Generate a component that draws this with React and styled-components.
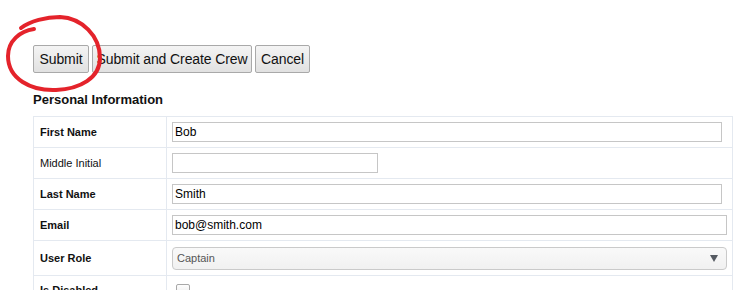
import styled, { createGlobalStyle } from "styled-components";

const GlobalStyle = createGlobalStyle`
  html, body {
    margin: 0;
    padding: 0;
    background: #ffffff;
  }
  body {
    font-family: "Liberation Sans", Arial, sans-serif;
    color: #000;
  }
`;

const Page = styled.div`
  position: relative;
  padding: 45px 0 0 33px;
  width: 754px;
  height: 290px;
  box-sizing: border-box;
  overflow: hidden;
`;

const Toolbar = styled.div`
  display: flex;
  gap: 3px;
  height: 28px;
`;

const Button = styled.button`
  width: ${(p) => p.$w}px;
  height: 28px;
  padding: 0;
  font-family: "Liberation Sans", Arial, sans-serif;
  font-size: 14px;
  letter-spacing: -0.1px;
  white-space: nowrap;
  color: #111;
  background: linear-gradient(#f4f4f4, #e1e1e1);
  border: 1px solid #a9a9a9;
  border-radius: 2px;
  cursor: pointer;
`;

const Heading = styled.h3`
  margin: 19px 0 8px;
  font-size: 13px;
  line-height: 16px;
  font-weight: bold;
  color: #111;
`;

const Table = styled.table`
  border-collapse: collapse;
  width: 700px;
  table-layout: fixed;
`;

const Row = styled.tr`
  height: ${(p) => p.$h || 31}px;
`;

const Label = styled.td`
  width: 120px;
  padding: ${(p) => (p.$top ? "8px 6px 0" : "0 6px")};
  border: 1px solid #e4e9f0;
  font-size: 11px;
  font-weight: ${(p) => (p.$bold ? "bold" : "normal")};
  color: #111;
  vertical-align: ${(p) => (p.$top ? "top" : "middle")};
`;

const Field = styled.td`
  padding: 0 5px;
  border: 1px solid #e4e9f0;
  vertical-align: ${(p) => (p.$top ? "top" : "middle")};
`;

const Input = styled.input`
  display: block;
  box-sizing: border-box;
  width: ${(p) => p.$w}px;
  height: 20px;
  padding: 0 2px;
  border: 1px solid #c6c6c6;
  font-family: "Liberation Sans", Arial, sans-serif;
  font-size: 12px;
  color: #000;
  outline: none;
`;

const Select = styled.div`
  box-sizing: border-box;
  width: 555px;
  height: 23px;
  padding: 0 4px;
  display: flex;
  align-items: center;
  border: 1px solid #cacaca;
  border-radius: 4px;
  background: linear-gradient(#f9f9f9, #f1f1f1);
  font-size: 11px;
  color: #555;
`;

const Arrow = styled.span`
  margin-left: auto;
  margin-right: 4px;
  width: 0;
  height: 0;
  border-left: 4px solid transparent;
  border-right: 4px solid transparent;
  border-top: 7px solid #555a62;
`;

const Checkbox = styled.span`
  display: block;
  margin-left: 4px;
  margin-top: 8px;
  width: 12px;
  height: 12px;
  border: 1px solid #a8a8a8;
  border-radius: 2px;
  background: linear-gradient(#fdfdfd, #e8e8e8);
`;

const Scribble = styled.svg`
  position: absolute;
  left: 0;
  top: 0;
  pointer-events: none;
`;

export default function App() {
  return (
    <Page>
      <GlobalStyle />
      <Toolbar>
        <Button $w={56}>Submit</Button>
        <Button $w={160}>Submit and Create Crew</Button>
        <Button $w={55}>Cancel</Button>
      </Toolbar>
      <Heading>Personal Information</Heading>
      <Table>
        <tbody>
          <Row>
            <Label $bold>First Name</Label>
            <Field>
              <Input $w={550} defaultValue="Bob" />
            </Field>
          </Row>
          <Row>
            <Label>Middle Initial</Label>
            <Field>
              <Input $w={206} defaultValue="" />
            </Field>
          </Row>
          <Row>
            <Label $bold>Last Name</Label>
            <Field>
              <Input $w={550} defaultValue="Smith" />
            </Field>
          </Row>
          <Row>
            <Label $bold>Email</Label>
            <Field>
              <Input $w={555} defaultValue="bob@smith.com" />
            </Field>
          </Row>
          <Row $h={35}>
            <Label $bold>User Role</Label>
            <Field>
              <Select>
                Captain
                <Arrow />
              </Select>
            </Field>
          </Row>
          <Row>
            <Label $bold $top>
              Is Disabled
            </Label>
            <Field $top>
              <Checkbox />
            </Field>
          </Row>
        </tbody>
      </Table>
      <Scribble width="120" height="100" viewBox="0 0 120 100">
        <path
          d="M34 29 C20 31 8 41 8 56 C8 79 31 91 56 90 C80 89 100 78 100 58 C100 36 82 18 60 17 C46 17 30 21 21 28"
          fill="none"
          stroke="#e4232b"
          strokeWidth="4"
          strokeLinecap="round"
        />
      </Scribble>
    </Page>
  );
}
